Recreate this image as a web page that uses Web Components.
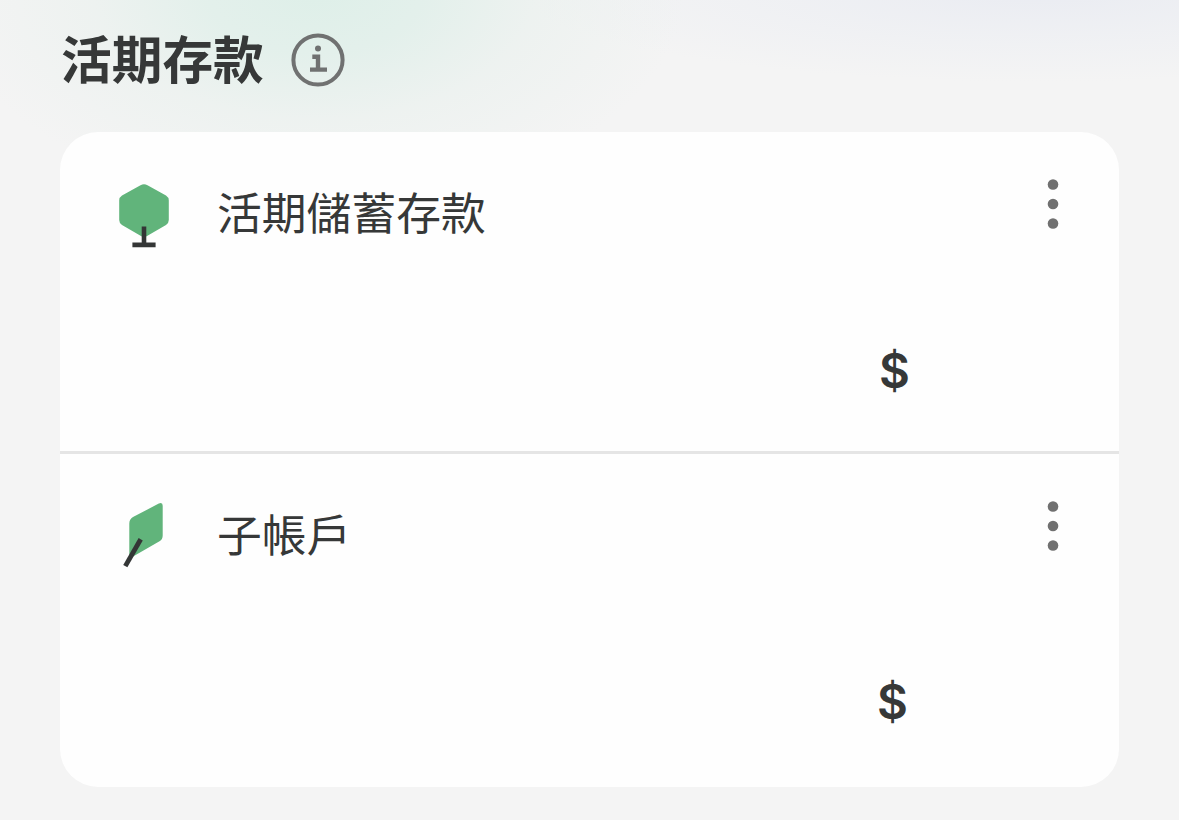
<!DOCTYPE html>
<html lang="zh-Hant">
<head>
<meta charset="utf-8">
<title>活期存款</title>
<style>
  body {
    margin: 0;
    color: #363838;
    font-family: "Noto Sans CJK TC", "Noto Sans", sans-serif;
  }
</style>
</head>
<body>
<deposit-page>
  <section-title slot="title">活期存款</section-title>
  <account-card>
    <account-row>
      <tree-icon slot="icon"></tree-icon>
      活期儲蓄存款
      <span slot="amount">$</span>
    </account-row>
    <account-row class="sub">
      <leaf-icon slot="icon"></leaf-icon>
      子帳戶
      <span slot="amount">$</span>
    </account-row>
  </account-card>
</deposit-page>

<script>
// Base class: renders the template of each element in an open shadow root
class BaseElement extends HTMLElement {
  constructor() {
    super();
    this.attachShadow({ mode: "open" });
  }

  connectedCallback() {
    this.shadowRoot.innerHTML = this.template();
  }
}

// Page background and main column
class DepositPage extends BaseElement {
  template() {
    return `
    <style>
      :host {
        display: block;
        box-sizing: border-box;
        width: 1179px;
        height: 820px;
        padding: 0 60px;
        overflow: hidden;
        background:
          radial-gradient(ellipse 370px 215px at 315px -10px, rgba(221, 239, 232, .95) 0%, rgba(223, 239, 233, .8) 30%, rgba(231, 240, 236, .5) 60%, rgba(244, 244, 244, 0) 100%),
          radial-gradient(ellipse 520px 90px at 1040px -8px, #eaecf2 0%, rgba(236, 238, 243, .6) 50%, rgba(244, 244, 244, 0) 100%),
          #f4f4f4;
      }
      header {
        height: 132px;
      }
    </style>
    <header><slot name="title"></slot></header>
    <slot></slot>`;
  }
}

// Section heading with the info button
class SectionTitle extends BaseElement {
  template() {
    return `
    <style>
      :host {
        display: flex;
        align-items: center;
        gap: 27px;
        height: 120px;
        padding-left: 1px;
      }
      h1 {
        margin: 0 0 6px;
        font-size: 50.7px;
        line-height: 60px;
        font-weight: 700;
      }
      svg {
        display: block;
      }
    </style>
    <h1><slot></slot></h1>
    <svg width="54" height="54" viewBox="0 0 54 54" fill="none" stroke="#707171">
      <circle cx="27" cy="27" r="24.6" stroke-width="4"/>
      <circle cx="27" cy="15.6" r="3" fill="#707171" stroke="none"/>
      <path d="M21.3 23.8H27V36M19 36.6h17" stroke-width="4.4"/>
    </svg>`;
  }
}

// White rounded container
class AccountCard extends BaseElement {
  template() {
    return `
    <style>
      :host {
        display: block;
        height: 655px;
        border-radius: 38px;
        background: #fefefe;
        overflow: hidden;
      }
    </style>
    <slot></slot>`;
  }
}

// One account: icon, name, menu and amount
class AccountRow extends BaseElement {
  template() {
    return `
    <style>
      :host {
        display: flex;
        flex-direction: column;
        box-sizing: border-box;
        height: 319px;
        padding: 47px 59px 0 54px;
      }
      :host(.sub) {
        height: 336px;
        padding-top: 47px;
        border-top: 3px solid #e5e5e5;
      }
      .top {
        display: flex;
        align-items: flex-start;
        height: 72px;
      }
      .icon {
        width: 60px;
        height: 72px;
      }
      .name {
        flex: 1;
        margin: -1px 0 0 43px;
        font-size: 44.8px;
        line-height: 66px;
      }
      .menu {
        width: 14px;
        height: 50px;
      }
      .amount {
        align-self: flex-end;
        margin: 90px 150px 0 0;
        font: 600 47.5px/60px Inter, "Liberation Sans", sans-serif;
      }
      :host(.sub) .amount {
        margin: 99px 152px 0 0;
      }
    </style>
    <div class="top">
      <div class="icon"><slot name="icon"></slot></div>
      <div class="name"><slot></slot></div>
      <svg class="menu" viewBox="0 0 14 50" fill="#707070">
        <circle cx="7" cy="5.5" r="5.3"/>
        <circle cx="7" cy="25" r="5.3"/>
        <circle cx="7" cy="44.5" r="5.3"/>
      </svg>
    </div>
    <div class="amount"><slot name="amount"></slot></div>`;
  }
}

class TreeIcon extends BaseElement {
  template() {
    return `
    <style>
      :host, svg { display: block; }
    </style>
    <svg width="60" height="72" viewBox="0 0 60 72">
      <path fill="#61b47b" d="M26.5 6.3Q30 4.3 33.5 6.3L52 16.5Q54.8 18.2 54.8 21.5V41Q54.8 44.2 52 45.9L32.6 57.2Q30 58.7 27.4 57.2L8 45.9Q5.2 44.2 5.2 41V21.5Q5.2 18.2 8 16.5Z"/>
      <path fill="none" stroke="#343636" stroke-width="4.6" d="M30 47.5V66M18.4 65.9H41.6"/>
    </svg>`;
  }
}

class LeafIcon extends BaseElement {
  template() {
    return `
    <style>
      :host, svg { display: block; }
    </style>
    <svg width="60" height="72" viewBox="0 0 60 72">
      <path fill="#61b47b" d="M19 16L44.8 2.6Q48.7 .9 48.7 4.8V34.5Q48.7 38.5 45.5 40.3L19.5 55.2Q15.3 57 15.3 53V22.5Q15.3 18.300 19 16Z"/>
      <path fill="none" stroke="#343636" stroke-width="4.800" d="M26.700 38.300L11.300 65.100"/>
    </svg>`;
  }
}

customElements.define("deposit-page", DepositPage);
customElements.define("section-title", SectionTitle);
customElements.define("account-card", AccountCard);
customElements.define("account-row", AccountRow);
customElements.define("tree-icon", TreeIcon);
customElements.define("leaf-icon", LeafIcon);
</script>
</body>
</html>
